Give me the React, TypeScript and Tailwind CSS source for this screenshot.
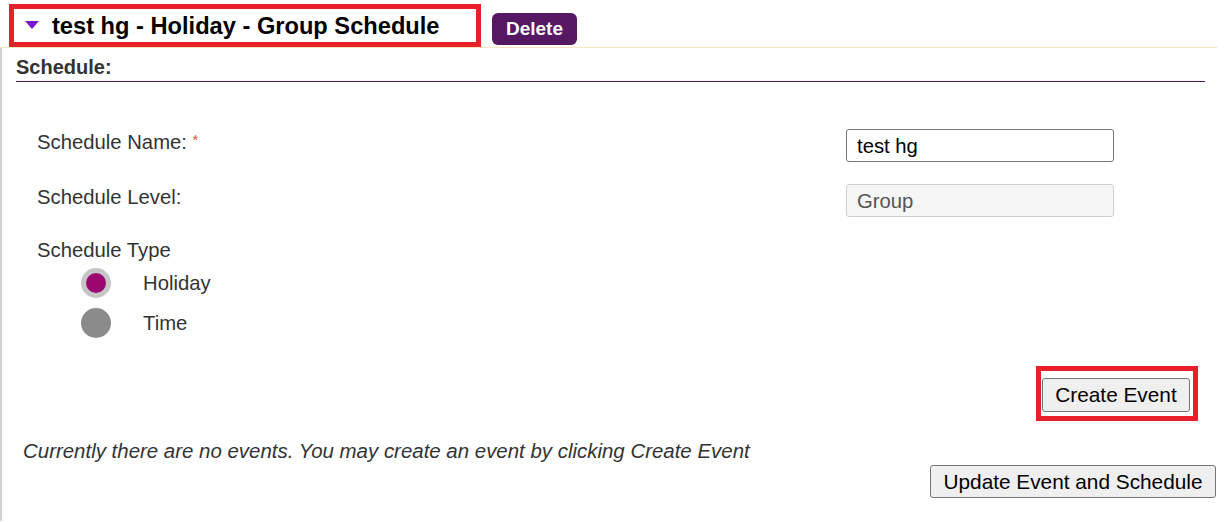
import { useState } from 'react';

const FONT = { fontFamily: '"Liberation Sans", Arial, sans-serif' };

// radio options for schedule type
const DATA_types = [
  { id: 'holiday', name: 'Holiday' },
  { id: 'time', name: 'Time' },
];

const App = () => {
  const [scheduleName, setScheduleName] = useState('test hg');
  const [scheduleType, setScheduleType] = useState('holiday');

  const renderHeader = () => {
    return (
      <div className="flex h-[48px] items-start border-b border-[#f4e4c1]">
        <div className="ml-[9px] mt-[4px] flex h-[43px] w-[472px] items-start border-[5px] border-[#e8202a] pl-[11px]">
          <span className="mt-[12px] block h-0 w-0 border-x-[7.5px] border-t-[8px] border-x-transparent border-t-[#7a1ad0]" />
          <h2 className="ml-[13px] pt-[2px] text-[23.65px] font-bold leading-[31px] text-black">
            test hg - Holiday - Group Schedule
          </h2>
        </div>
        <button
          type="button"
          className="ml-[11px] mt-[13px] h-[32px] w-[85px] rounded-[6px] bg-[#561862] text-[19px] font-bold leading-[32px] text-white"
        >
          Delete
        </button>
      </div>
    );
  };

  const renderTypeRadios = () => {
    return (
      <div className="ml-[44px] mt-[6px] flex flex-col gap-y-[10px]">
        {DATA_types.map((item) => {
          const checked = scheduleType === item.id;
          return (
            <label
              key={item.id}
              className="flex cursor-pointer items-center"
              onClick={() => setScheduleType(item.id)}
            >
              {checked ? (
                <span className="flex h-[30px] w-[30px] items-center justify-center rounded-full bg-[#c6c6c6]">
                  <span className="h-[20px] w-[20px] rounded-full bg-[#9c0870]" />
                </span>
              ) : (
                <span className="h-[30px] w-[30px] rounded-full bg-[#8b8b8b]" />
              )}
              <span className="ml-[32px] text-[20.3px] leading-[23px] text-[#333]">{item.name}</span>
            </label>
          );
        })}
      </div>
    );
  };

  return (
    <div className="w-[1217px] bg-white" style={FONT}>
      {renderHeader()}
      <div className="border-l-[2px] border-[#d2d2d2] pl-[14px]">
        <div className="mr-[12px] border-b border-[#4e1a5e] pb-[2px] pt-[8px]">
          <h3 className="text-[20px] font-bold leading-[23px] text-[#333]">Schedule:</h3>
        </div>

        <div className="pl-[21px] pt-[47px]">
          <div className="grid grid-cols-[809px_268px] gap-y-[22px]">
            <div className="pt-[2px] text-[20.3px] leading-[23px] text-[#333]">
              Schedule Name:{' '}
              <span className="relative top-[-4px] text-[15px] text-[#e0553a]">*</span>
            </div>
            <input
              value={scheduleName}
              onChange={(e) => setScheduleName(e.target.value)}
              className="h-[33px] rounded-[3px] border border-[#767676] bg-white px-[10px] pt-[1px] text-[20.3px] text-black outline-none"
            />
            <div className="pt-[2px] text-[20.3px] leading-[23px] text-[#333]">Schedule Level:</div>
            <input
              value="Group"
              disabled
              className="h-[33px] rounded-[3px] border border-[#d0d0d0] bg-[#f6f6f6] px-[10px] pt-[1px] text-[20.3px] text-[#555]"
            />
          </div>

          <div className="mt-[22px] text-[20.3px] leading-[23px] text-[#333]">Schedule Type</div>
          {renderTypeRadios()}
        </div>

        <div className="mr-[19px] mt-[28px] flex justify-end">
          <div className="h-[55px] w-[162px] border-[5px] border-[#e8202a] pl-[1px] pt-[7px]">
            <button
              type="button"
              className="h-[34px] w-[148px] rounded-[3px] border border-[#767676] bg-[#efefef] text-[20.8px] leading-[32px] text-black"
            >
              Create Event
            </button>
          </div>
        </div>

        <p className="ml-[7px] mt-[18px] text-[20.45px] italic leading-[23px] text-[#333]">
          Currently there are no events. You may create an event by clicking Create Event
        </p>

        <div className="mr-[1px] mt-[3px] flex justify-end pb-[23px]">
          <button
            type="button"
            className="h-[33px] w-[286px] rounded-[3px] border border-[#767676] bg-[#efefef] text-[20.8px] leading-[31px] text-black"
          >
            Update Event and Schedule
          </button>
        </div>
      </div>
    </div>
  );
};

export default App;
